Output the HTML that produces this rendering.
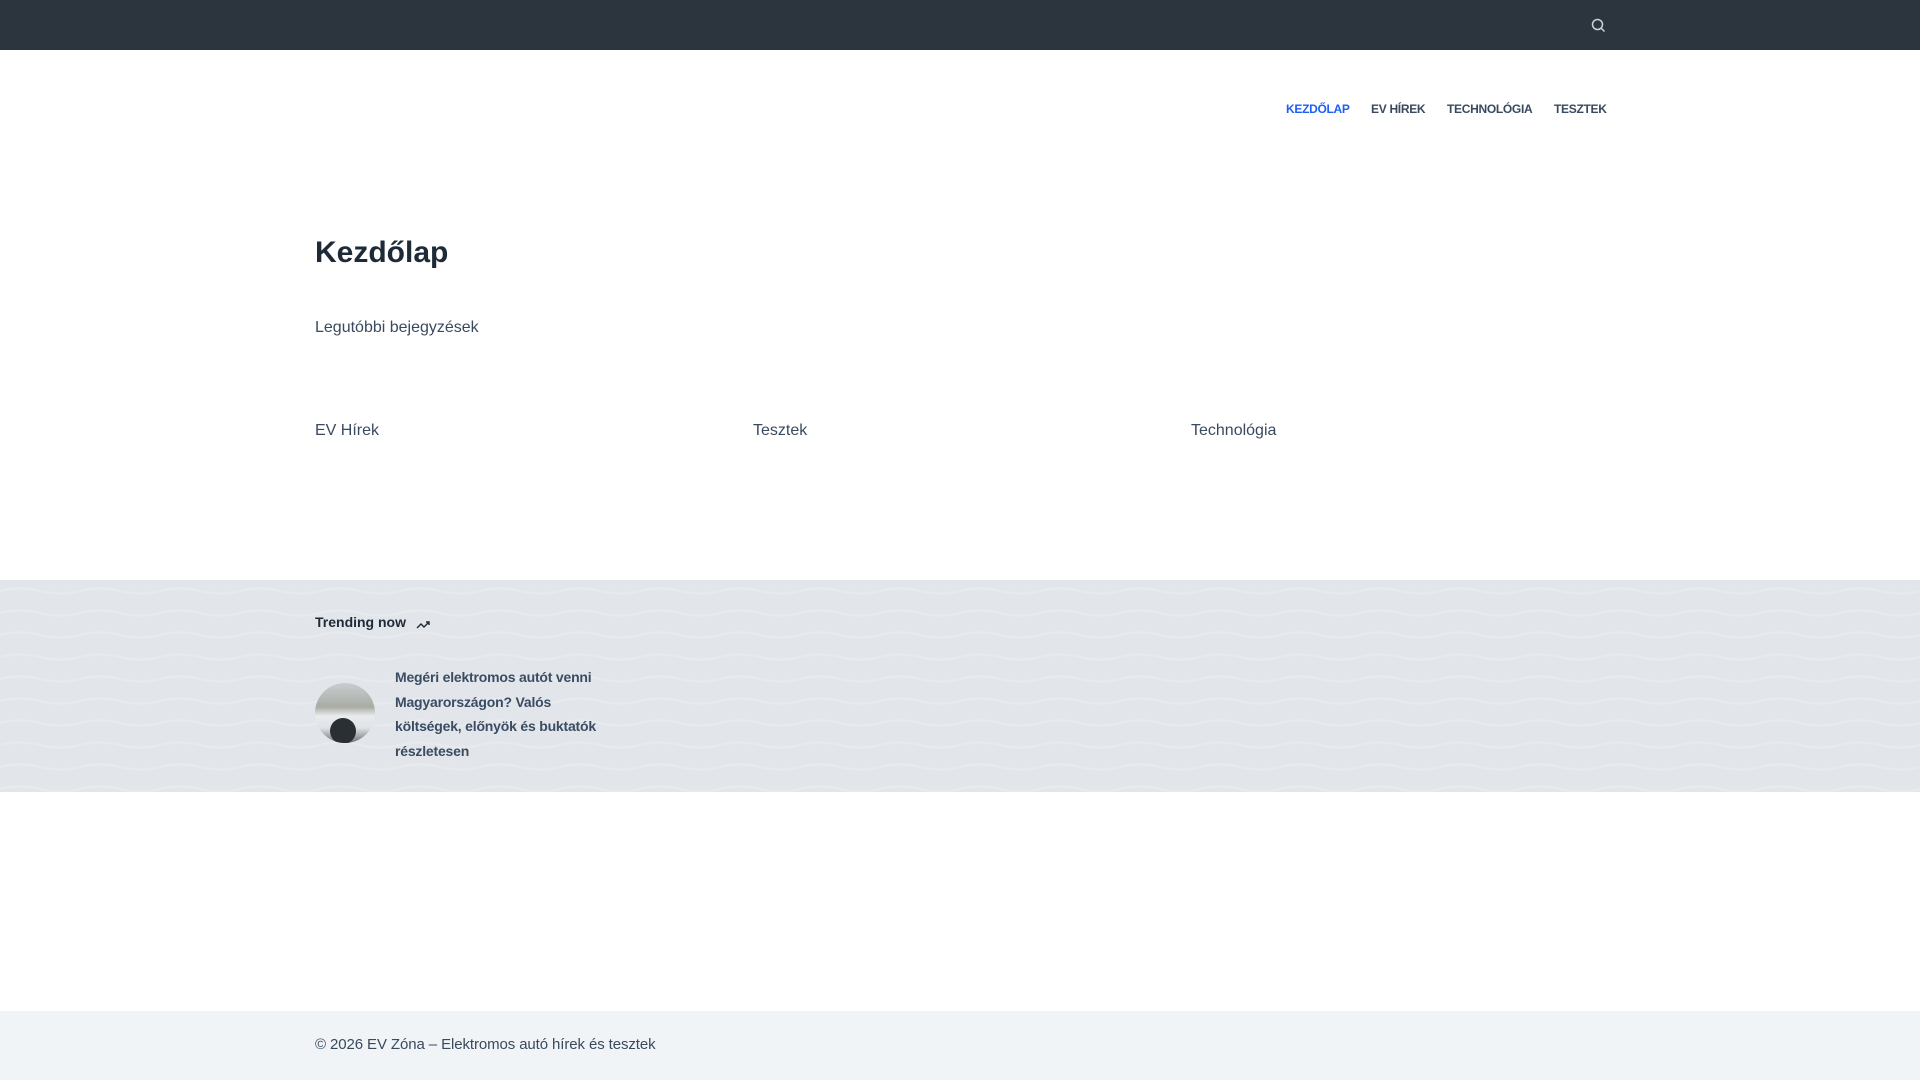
<!DOCTYPE html>
<html><head><meta charset="utf-8"><style>
body{margin:0;width:1920px;height:1080px;background:#fff;font-family:"Liberation Sans",sans-serif;position:relative;overflow:hidden;color:#3a4a5e}
.a{position:absolute;white-space:nowrap}
.top{position:absolute;left:0;top:0;width:1920px;height:50px;background:#2c343e}
.nav{font-size:12px;font-weight:bold;color:#3a4a5e;top:102px;letter-spacing:-0.3px}
.trend{position:absolute;left:0;top:580px;width:1920px;height:212px;background:#e2e6ea;overflow:hidden}
.foot{position:absolute;left:0;top:1011px;width:1920px;height:69px;background:#f1f4f7}
</style></head><body>
<div class="top"></div>
<svg class="a" style="left:1591px;top:18px" width="15" height="15" viewBox="0 0 15 15"><circle cx="6.5" cy="6.5" r="5" fill="none" stroke="#ccd2d8" stroke-width="1.5"/><path d="M10 10l3.5 3.5" stroke="#ccd2d8" stroke-width="1.5"/></svg>
<div class="a nav" style="left:1286px;color:#1f5ff2">KEZDŐLAP</div>
<div class="a nav" style="left:1371px">EV HÍREK</div>
<div class="a nav" style="left:1447px">TECHNOLÓGIA</div>
<div class="a nav" style="left:1554px">TESZTEK</div>
<div class="a" style="left:315px;top:236px;font-size:30px;font-weight:bold;color:#1e2a38">Kezdőlap</div>
<div class="a" style="left:315px;top:319px;font-size:16px">Legutóbbi bejegyzések</div>
<div class="a" style="left:315px;top:422px;font-size:16px">EV Hírek</div>
<div class="a" style="left:753px;top:422px;font-size:16px">Tesztek</div>
<div class="a" style="left:1191px;top:422px;font-size:16px">Technológia</div>
<div class="trend">
<svg width="1920" height="212" style="position:absolute;left:0;top:0"><defs><pattern id="w" width="80" height="22" patternUnits="userSpaceOnUse"><path d="M0 11 Q20 6 40 11 T80 11" fill="none" stroke="#e8ebee" stroke-width="2"/></pattern></defs><rect width="1920" height="212" fill="url(#w)"/></svg>
</div>
<div class="a" style="left:315px;top:614px;font-size:14px;font-weight:bold;color:#1e2a38">Trending now</div>
<svg class="a" style="left:416px;top:618px" width="16" height="12" viewBox="0 0 16 12"><path d="M1 10l4-4 3 3 5-5M10 4h3v3" fill="none" stroke="#1e2a38" stroke-width="1.4"/></svg>
<div class="a" style="left:315px;top:683px;width:60px;height:60px;border-radius:50%;overflow:hidden;background:linear-gradient(#c9cdd0 0,#a9aca4 40%,#e9ecef 55%,#dfe3e6 75%,#6b7074 100%)"><div style="position:absolute;left:15px;top:35px;width:26px;height:26px;border-radius:50%;background:#2a2f33"></div></div>
<div class="a" style="left:395px;top:665px;font-size:14px;line-height:24.6px;font-weight:bold;color:#3a4c63;white-space:normal;width:225px;letter-spacing:-0.2px">Megéri elektromos autót venni Magyarországon? Valós költségek, előnyök és buktatók részletesen</div>
<div class="foot"></div>
<div class="a" style="left:315px;top:1036px;font-size:15px;letter-spacing:-0.1px">© 2026 EV Zóna – Elektromos autó hírek és tesztek</div>
</body></html>
